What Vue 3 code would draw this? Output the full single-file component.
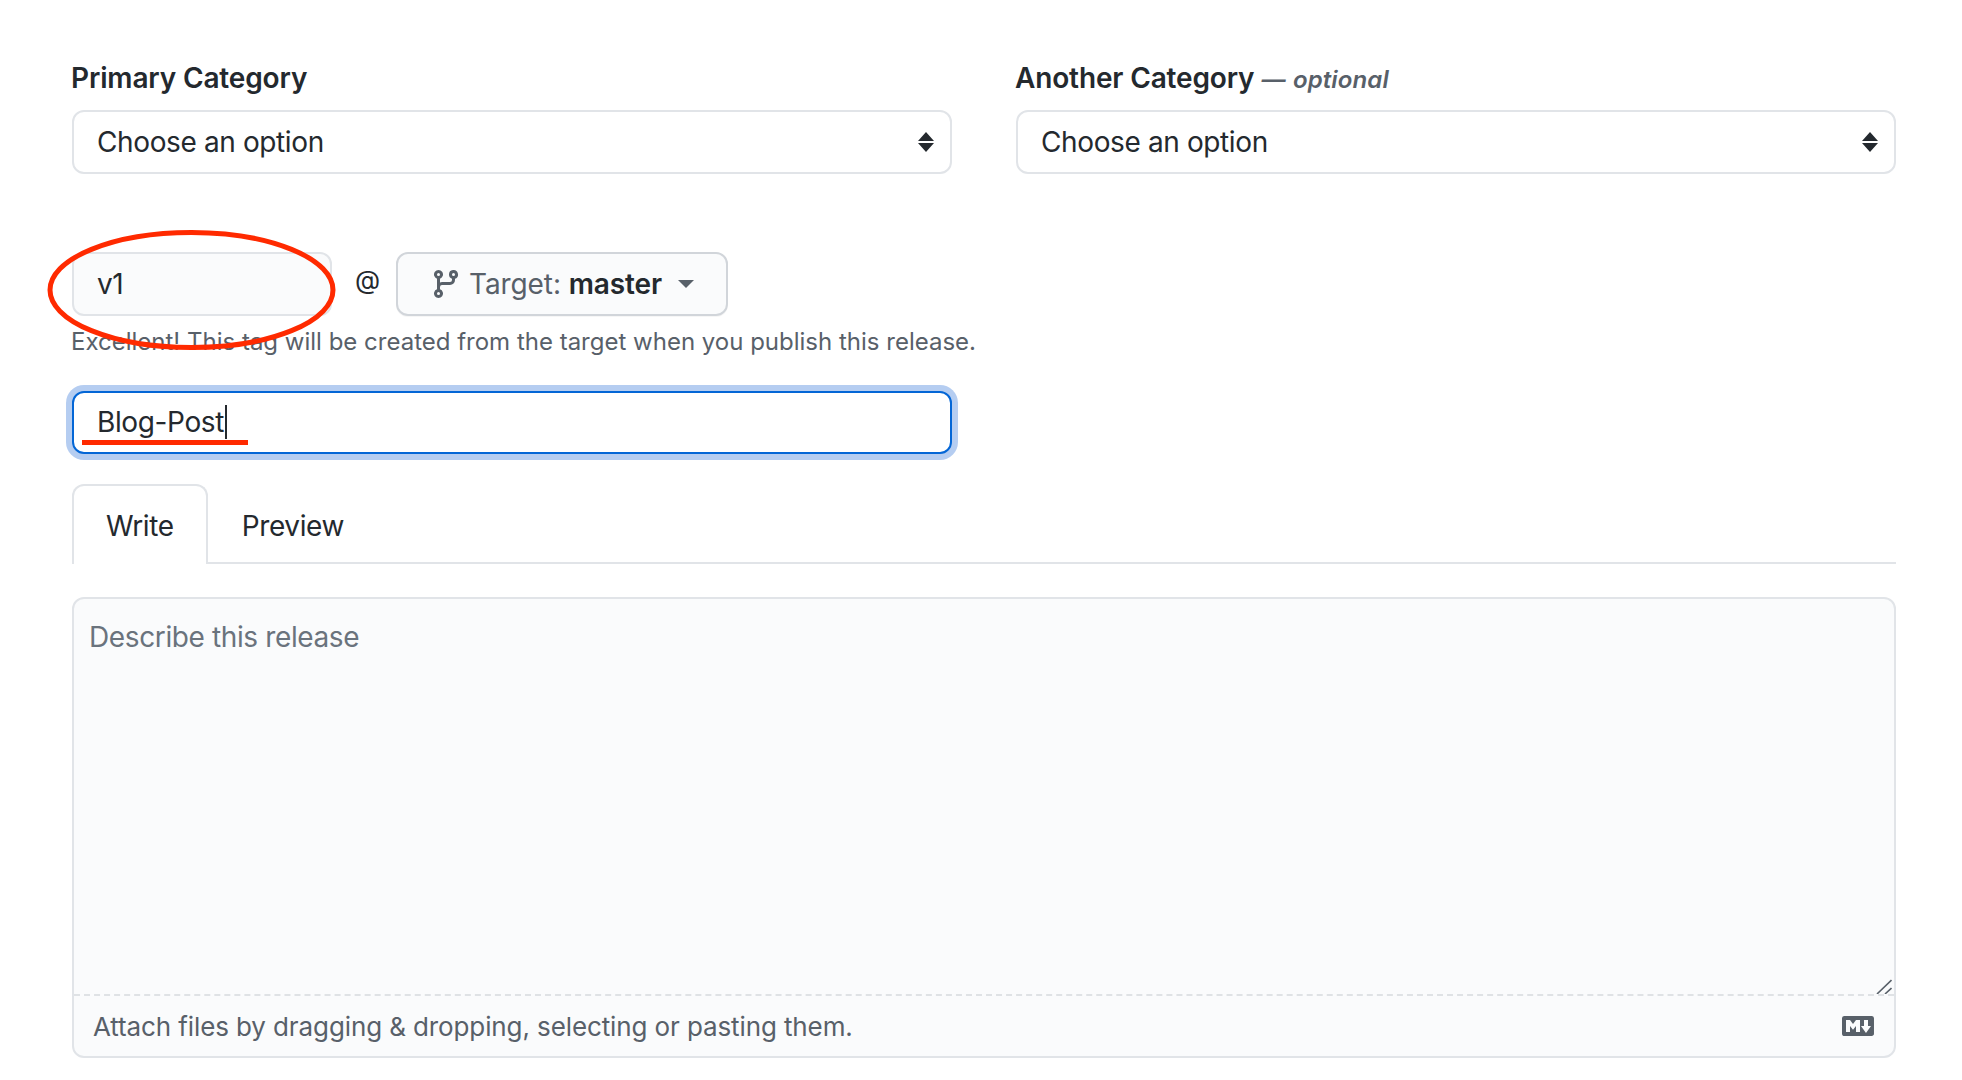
<script setup>
const categories = [
  { label: 'Primary Category', optional: false },
  { label: 'Another Category', optional: true },
]
</script>

<template>
  <div class="page">
    <div class="cats">
      <div v-for="c in categories" :key="c.label" class="cat">
        <div class="label">{{ c.label }}<span v-if="c.optional" class="opt"> — optional</span></div>
        <div class="select">
          <span>Choose an option</span>
          <svg class="updown" width="16" height="20" viewBox="0 0 16 20"><path d="M8 0l8 9H0zM8 20L0 11h16z" fill="#24292e"/></svg>
        </div>
      </div>
    </div>

    <div class="tagrow">
      <div class="tag">v1</div>
      <span class="at">@</span>
      <div class="target">
        <svg class="branch" width="32" height="32" viewBox="0 0 16 16"><path fill="#586069" fill-rule="evenodd" d="M11.75 2.5a.75.75 0 100 1.5.75.75 0 000-1.5zm-2.25.75a2.25 2.25 0 113 2.122V6A2.5 2.5 0 0110 8.5H6a1 1 0 00-1 1v1.128a2.251 2.251 0 11-1.5 0V5.372a2.25 2.25 0 111.5 0v1.836A2.492 2.492 0 016 7h4a1 1 0 001-1v-.628A2.25 2.25 0 019.5 3.25zM4.25 12a.75.75 0 100 1.5.75.75 0 000-1.5zM3.5 3.25a.75.75 0 111.5 0 .75.75 0 01-1.5 0z"/></svg>
        <span class="t-name">Target: <b>master</b></span>
        <span class="caret-down"></span>
      </div>
    </div>
    <div class="help">Excellent! This tag will be created from the target when you publish this release.</div>

    <div class="title"><span class="title-text">Blog-Post</span><i class="cursor"></i><span class="underline"></span></div>

    <div class="tabs">
      <div class="tab active">Write</div>
      <div class="tab">Preview</div>
    </div>

    <div class="editor">
      <div class="ph">Describe this release</div>
      <svg class="resize" width="16" height="15" viewBox="0 0 16 15"><path d="M1 15L15.5 1M9 15l6.5-6" stroke="#586069" stroke-width="1.6" fill="none"/></svg>
      <div class="foot">
        <span>Attach files by dragging &amp; dropping, selecting or pasting them.</span>
        <svg width="32" height="32" viewBox="0 0 16 16"><path fill="#586069" fill-rule="evenodd" d="M14.85 3H1.15C.52 3 0 3.52 0 4.15v7.69C0 12.48.52 13 1.15 13h13.69c.64 0 1.15-.52 1.15-1.15v-7.7C16 3.52 15.48 3 14.85 3zM9 11H7V8L5.5 9.92 4 8v3H2V5h2l1.5 2L7 5h2v6zm2.99.5L9.5 8H11V5h2v3h1.5l-2.51 3.5z"/></svg>
      </div>
    </div>

    <svg class="circle" width="300" height="130" viewBox="0 0 300 130"><ellipse cx="148.5" cy="65" rx="141.5" ry="57.5" fill="none" stroke="#ff2a00" stroke-width="5"/></svg>
  </div>
</template>

<style>
html, body { background: #fff; }
</style>

<style scoped>
.page {
  position: relative;
  width: 1962px;
  height: 1080px;
  box-sizing: border-box;
  padding: 60px 66px 0 72px;
  font-family: Inter, "Liberation Sans", sans-serif;
  font-size: 28px;
  letter-spacing: -0.38px;
  color: #24292e;
  overflow: hidden;
}
.cats { display: flex; gap: 64px; }
.cat { flex: 1 1 0; }
.label { font-weight: 600; height: 36px; line-height: 36px; margin: 0 0 14px -1px; white-space: nowrap; letter-spacing: -0.15px; }
.opt { font-size: 24px; font-style: italic; color: #586069; letter-spacing: 0.12px; word-spacing: 1px; }
.select {
  height: 64px;
  box-sizing: border-box;
  border: 2px solid #e1e4e8;
  border-radius: 12px;
  padding: 0 16px 0 23px;
  display: flex;
  align-items: center;
  justify-content: space-between;
  background: #fff;
}
.tagrow { display: flex; align-items: center; margin-top: 78px; height: 64px; }
.tag {
  width: 260px;
  height: 64px;
  box-sizing: border-box;
  border: 2px solid #e1e4e8;
  border-radius: 12px;
  background: #fafbfc;
  padding: 0 23px;
  display: flex;
  align-items: center;
}
.at { width: 24px; text-align: center; font-size: 26px; margin: -8px 17px 0 23px; line-height: 30px; letter-spacing: 0; }
.target {
  width: 332px;
  height: 64px;
  box-sizing: border-box;
  border: 2px solid #d1d5da;
  border-radius: 12px;
  background: #fafbfc;
  box-shadow: 0 1px 0 rgba(27,31,35,.04);
  display: flex;
  align-items: center;
  padding-left: 32px;
  color: #586069;
}
.branch { flex: none; margin-right: 7px; }
.t-name { white-space: nowrap; letter-spacing: -0.1px; }
.t-name b { font-weight: 600; color: #24292e; }
.caret-down {
  margin-left: 16px;
  border: 8px solid transparent;
  border-top-color: #586069;
  border-bottom: 0;
}
.help { margin-top: 8px; margin-left: -1px; font-size: 24px; line-height: 36px; color: #586069; white-space: nowrap; letter-spacing: 0; }
.title {
  position: relative;
  width: 880px;
  height: 63px;
  box-sizing: border-box;
  margin-top: 31px;
  border: 2px solid #0366d6;
  border-radius: 12px;
  box-shadow: 0 0 0 6px #b5cdf1;
  padding: 0 23px;
  display: flex;
  align-items: center;
  background: #fff;
}
.title-text { margin-top: -2px; }
.cursor { display: block; width: 2px; height: 34px; background: #24292e; margin: -2px 0 0 1px; }
.underline { position: absolute; left: 8px; top: 47px; width: 166px; height: 5px; background: #ff2a00; }
.tabs {
  display: flex;
  margin-top: 30px;
  height: 80px;
  box-sizing: border-box;
  border-bottom: 2px solid #e1e4e8;
}
.tab { height: 80px; box-sizing: border-box; padding: 0 34px; line-height: 84px; }
.tab.active {
  border: 2px solid #e1e4e8;
  border-bottom: 0;
  border-radius: 12px 12px 0 0;
  background: #fff;
  padding: 0 32px;
  line-height: 80px;
}
.editor {
  position: relative;
  margin-top: 33px;
  height: 461px;
  box-sizing: border-box;
  border: 2px solid #e1e4e8;
  border-radius: 12px;
  background: #fafbfc;
  display: flex;
  flex-direction: column;
}
.ph { flex: 1; padding: 20px 15px; line-height: 36px; color: #6a737d; }
.resize { position: absolute; right: 2px; bottom: 62px; }
.foot {
  height: 62px;
  box-sizing: border-box;
  border-top: 2px dashed #dfe2e5;
  padding: 0 20px 0 19px;
  display: flex;
  align-items: center;
  justify-content: space-between;
  font-size: 26px;
  letter-spacing: -0.11px;
  color: #586069;
}
.circle { position: absolute; left: 43px; top: 225px; pointer-events: none; }
</style>
